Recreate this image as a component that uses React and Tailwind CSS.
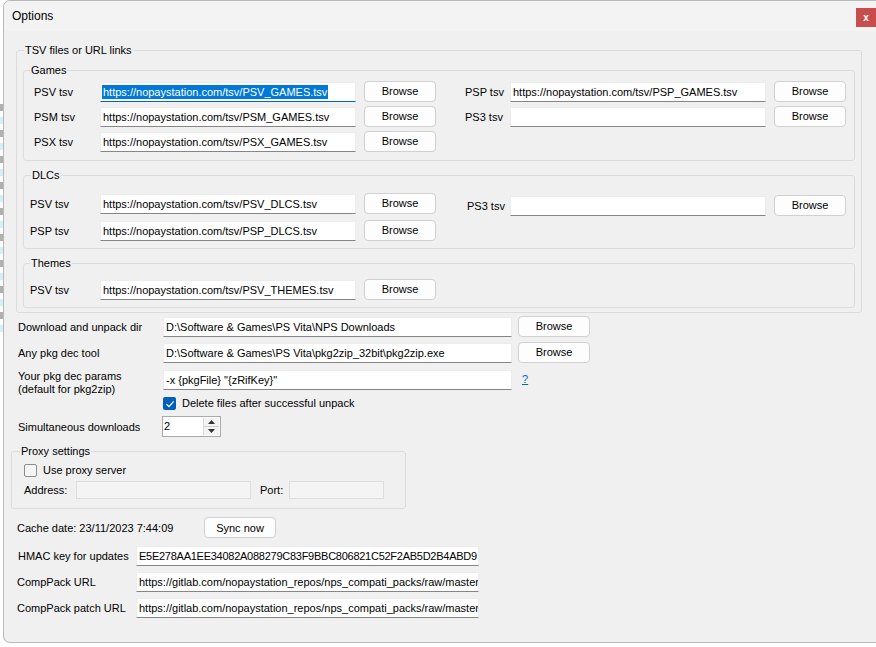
import React from 'react';

function Field({ value, width, focused, height = 'h-[20px]', tight }) {
  return (
    <div
      className={`${width} ${height} bg-white border border-[#ececec] ${focused ? 'border-b-[#0067c0]' : 'border-b-[#868686]'} pl-[1px] flex items-center overflow-hidden whitespace-nowrap text-[11px] leading-[14px] ${tight ? 'tracking-[-0.26px]' : ''}`}
    >
      {focused ? <span className="bg-[#0078d7] text-white px-[1px]">{value}</span> : <span className="px-[1px]">{value}</span>}
    </div>
  );
}

function Browse({ label = 'Browse', width = 'w-[72px]' }) {
  return (
    <button className={`${width} h-[21px] bg-[#fdfdfd] border border-[#d0d0d0] rounded-[4px] text-[11px] leading-[14px] text-black`}>
      {label}
    </button>
  );
}

function TsvRow({ label, labelW, value, focused }) {
  return (
    <div className="flex items-end h-[21px]">
      <span className={`${labelW} self-center text-[11px] leading-[14px]`}>{label}</span>
      <Field value={value} width="w-[256px]" focused={focused} />
      <div className="ml-[8px]">
        <Browse />
      </div>
    </div>
  );
}

function Group({ title, className, legendClass = 'ml-[6px]', children }) {
  return (
    <fieldset className={`border border-[#dcdcdc] rounded-[3px] ${className}`}>
      <legend className={`${legendClass} px-[1px] text-[11px] leading-[14px]`}>{title}</legend>
      {children}
    </fieldset>
  );
}

function Check({ checked }) {
  return checked ? (
    <span className="w-[13px] h-[13px] rounded-[2px] bg-[#005fb8] flex items-center justify-center">
      <svg width="10" height="10" viewBox="0 0 10 10">
        <path d="M1.5 5.2 L4 7.6 L8.6 2.4" fill="none" stroke="white" strokeWidth="1.3" />
      </svg>
    </span>
  ) : (
    <span className="w-[13px] h-[13px] rounded-[2px] bg-[#f5f5f5] border border-[#8c8c8c]" />
  );
}

function FormRow({ label, value, inputW, labelW, button, tight, className = '' }) {
  return (
    <div className={`flex items-end h-[21px] ${className}`}>
      <span className={`${labelW} self-center text-[11px] leading-[14px]`}>{label}</span>
      <Field value={value} width={inputW} tight={tight} />
      {button && (
        <div className="ml-[6px]">
          <Browse />
        </div>
      )}
    </div>
  );
}

function LeftStrip() {
  const bits = Array.from({ length: 18 });
  return (
    <div className="w-[3px] h-full bg-white flex flex-col overflow-hidden pt-[104px] gap-[6px]">
      {bits.map((_, i) => (
        <span key={i} className={`w-[3px] h-[7px] ${i % 2 ? 'bg-[#d3f0f5]' : 'bg-[#b0b0b0]'}`} />
      ))}
    </div>
  );
}

export default function App() {
  return (
    <div className="w-[876px] h-[647px] bg-white flex overflow-hidden text-black font-['Liberation_Sans',Arial,sans-serif]">
      <LeftStrip />
      <div className="flex-1 h-[643px] border border-r-0 border-[#b9b9b9] rounded-tl-[7px] rounded-bl-[7px] bg-[#f0f0f0] flex flex-col overflow-hidden">
        {/* title bar */}
        <div className="h-[30px] bg-[#f3f3f3] flex justify-between shrink-0">
          <span className="ml-[8px] mt-[8px] text-[12px] leading-[15px]">Options</span>
          <span className="mt-[7px] w-[20px] h-[19px] bg-[#c84e4e] text-white text-[10px] font-bold leading-[19px] text-center">x</span>
        </div>

        <div className="flex flex-col pl-[12px]">
          <Group title="TSV files or URL links" className="w-[846px] mt-[12px] px-[6px] pb-[4px]" legendClass="ml-[1px]">
            <Group title="Games" className="mt-[6px] pt-[4px] pb-[8px]" legendClass="ml-[6px]">
              <div className="flex">
                <div className="flex flex-col gap-[4px] pl-[10px]">
                  <TsvRow label="PSV tsv" labelW="w-[66px]" value="https://nopaystation.com/tsv/PSV_GAMES.tsv" focused />
                  <TsvRow label="PSM tsv" labelW="w-[66px]" value="https://nopaystation.com/tsv/PSM_GAMES.tsv" />
                  <TsvRow label="PSX tsv" labelW="w-[66px]" value="https://nopaystation.com/tsv/PSX_GAMES.tsv" />
                </div>
                <div className="flex flex-col gap-[4px] ml-[29px]">
                  <TsvRow label="PSP tsv" labelW="w-[45px]" value="https://nopaystation.com/tsv/PSP_GAMES.tsv" />
                  <TsvRow label="PS3 tsv" labelW="w-[45px]" value="" />
                </div>
              </div>
            </Group>

            <Group title="DLCs" className="mt-[7px] pt-[11px] pb-[7px]" legendClass="ml-[7px]">
              <div className="flex">
                <div className="flex flex-col gap-[6px] pl-[6px]">
                  <TsvRow label="PSV tsv" labelW="w-[70px]" value="https://nopaystation.com/tsv/PSV_DLCS.tsv" />
                  <TsvRow label="PSP tsv" labelW="w-[70px]" value="https://nopaystation.com/tsv/PSP_DLCS.tsv" />
                </div>
                <div className="flex flex-col ml-[31px] mt-[2px]">
                  <TsvRow label="PS3 tsv" labelW="w-[43px]" value="" />
                </div>
              </div>
            </Group>

            <Group title="Themes" className="mt-[7px] pt-[9px] pb-[7px]" legendClass="ml-[6px]">
              <div className="flex flex-col pl-[6px]">
                <TsvRow label="PSV tsv" labelW="w-[70px]" value="https://nopaystation.com/tsv/PSV_THEMES.tsv" />
              </div>
            </Group>
          </Group>
        </div>

        <div className="flex flex-col pl-[14px] mt-[3px]">
          <FormRow label="Download and unpack dir" labelW="w-[145px]" inputW="w-[349px]" value="D:\Software & Games\PS Vita\NPS Downloads" button />
          <FormRow className="mt-[5px]" label="Any pkg dec tool" labelW="w-[145px]" inputW="w-[349px]" value="D:\Software & Games\PS Vita\pkg2zip_32bit\pkg2zip.exe" button />
          <div className="flex items-start mt-[6px] h-[21px]">
            <span className="w-[145px] text-[11px] leading-[13px] mt-[1px] whitespace-nowrap">
              Your pkg dec params
              <br />
              (default for pkg2zip)
            </span>
            <Field value={'-x {pkgFile} "{zRifKey}"'} width="w-[349px] mt-[1px]" />
            <span className="ml-[10px] mt-[3px] text-[11px] leading-[14px] text-[#0066cc] underline">?</span>
          </div>
          <div className="flex items-center mt-[7px] ml-[145px] gap-[6px]">
            <Check checked />
            <span className="text-[11px] leading-[13px]">Delete files after successful unpack</span>
          </div>
          <div className="flex items-center mt-[6px] h-[21px]">
            <span className="w-[144px] text-[11px] leading-[14px]">Simultaneous downloads</span>
            <div className="w-[59px] h-[21px] bg-white border border-[#a9a9a9] flex">
              <span className="flex-1 pl-[1px] text-[11px] leading-[19px]">2</span>
              <div className="w-[16px] my-[1px] mr-[1px] flex flex-col border-l border-[#d9d9d9]">
                <span className="flex-1 flex items-center justify-center bg-[#f3f3f3] border-b border-[#d0d0d0]">
                  <svg width="7" height="4" viewBox="0 0 7 4"><path d="M0 4 L3.5 0 L7 4 Z" fill="#333" /></svg>
                </span>
                <span className="flex-1 flex items-center justify-center bg-[#f3f3f3]">
                  <svg width="7" height="4" viewBox="0 0 7 4"><path d="M0 0 L3.5 4 L7 0 Z" fill="#333" /></svg>
                </span>
              </div>
            </div>
          </div>
        </div>

        <div className="flex flex-col pl-[7px]">
          <Group title="Proxy settings" className="w-[395px] mt-[7px] pb-[9px]" legendClass="ml-[8px]">
            <div className="flex flex-col pl-[12px]">
              <div className="flex items-center mt-[6px] gap-[6px]">
                <Check />
                <span className="text-[11px] leading-[13px]">Use proxy server</span>
              </div>
              <div className="flex items-center mt-[4px] h-[18px]">
                <span className="w-[52px] text-[11px] leading-[14px]">Address:</span>
                <span className="w-[175px] h-[18px] bg-[#f4f4f4] border border-[#dedede]" />
                <span className="ml-[9px] w-[29px] text-[11px] leading-[14px]">Port:</span>
                <span className="w-[95px] h-[18px] bg-[#f4f4f4] border border-[#dedede]" />
              </div>
            </div>
          </Group>
        </div>

        <div className="flex flex-col pl-[13px]">
          <div className="flex items-center mt-[8px] h-[21px]">
            <span className="w-[187px] text-[11px] leading-[14px]">Cache date: 23/11/2023 7:44:09</span>
            <Browse label="Sync now" />
          </div>
          <FormRow className="mt-[7px]" label="HMAC key for updates" labelW="w-[119px] pl-[1px]" inputW="w-[343px]" value="E5E278AA1EE34082A088279C83F9BBC806821C52F2AB5D2B4ABD9" tight />
          <FormRow className="mt-[5px]" label="CompPack URL" labelW="w-[119px]" inputW="w-[343px]" value="https://gitlab.com/nopaystation_repos/nps_compati_packs/raw/master" />
          <FormRow className="mt-[5px]" label="CompPack patch URL" labelW="w-[119px]" inputW="w-[343px]" value="https://gitlab.com/nopaystation_repos/nps_compati_packs/raw/master" />
        </div>
      </div>
    </div>
  );
}
